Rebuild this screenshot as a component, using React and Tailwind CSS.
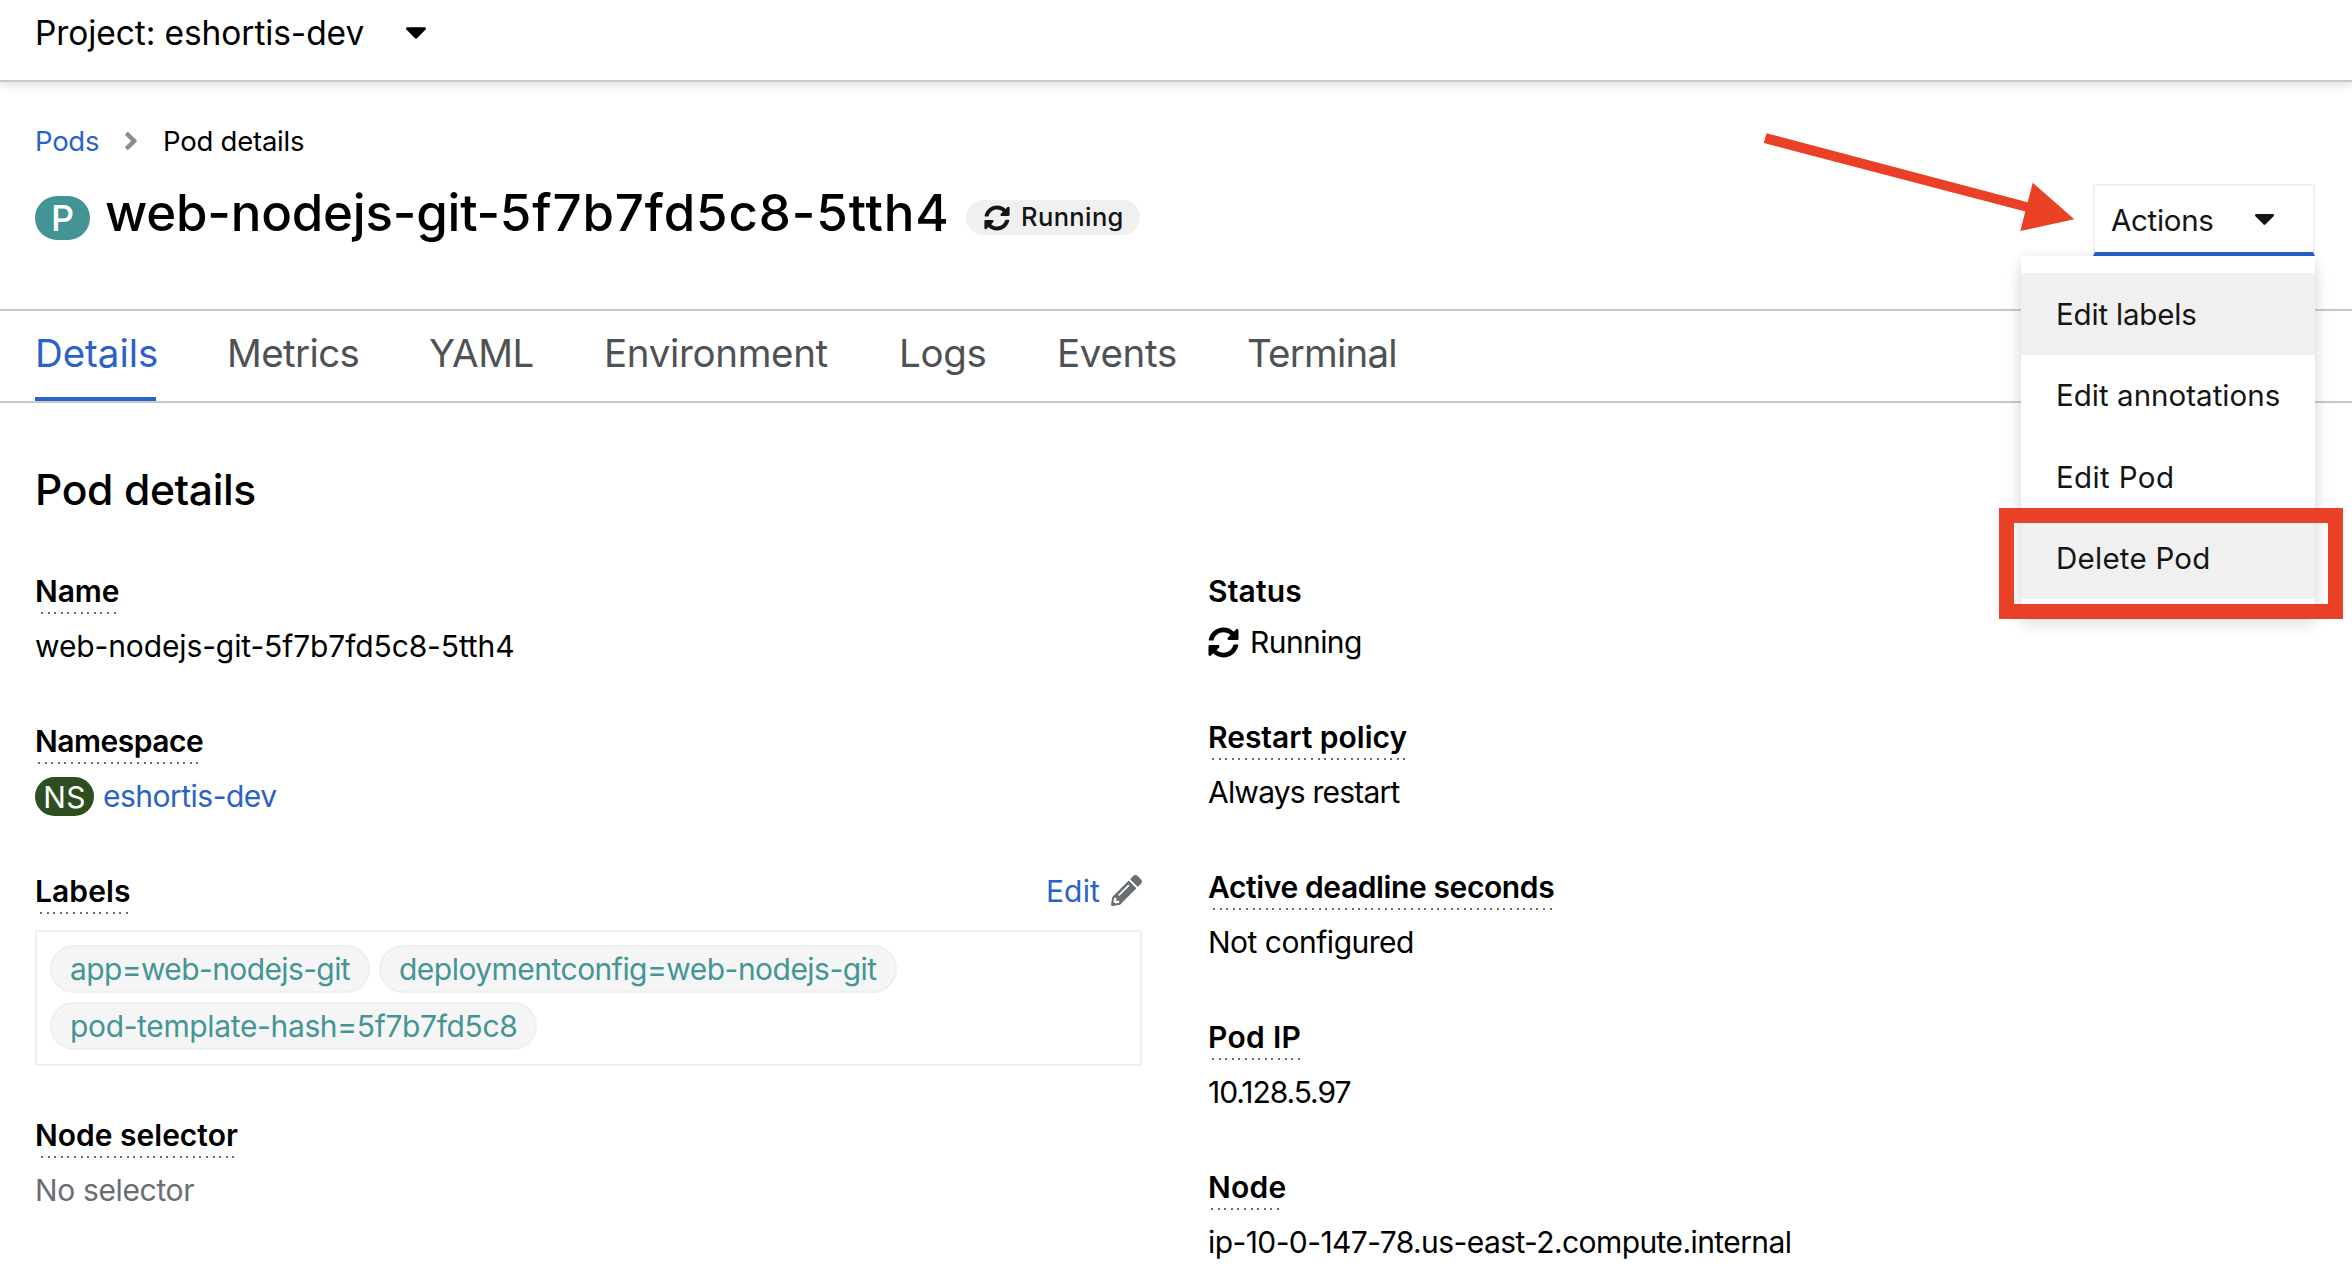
import React from "react";
import { FaPencilAlt, FaSyncAlt } from "react-icons/fa";

const tabs = [
  { label: "Details", cls: "w-[121px] tracking-[-0.0016em]", active: true },
  { label: "Metrics", cls: "w-[131px] tracking-[-0.0157em]" },
  { label: "YAML", cls: "w-[104px] tracking-[-0.0089em]" },
  { label: "Environment", cls: "w-[224px] tracking-[-0.0085em]" },
  { label: "Logs", cls: "w-[87px] tracking-[-0.0084em]" },
  { label: "Events", cls: "w-[119px] tracking-[-0.0075em]" },
  { label: "Terminal", cls: "w-[150px] tracking-[-0.0204em]" },
];

const menuItems = [
  { label: "Edit labels", cls: "bg-[#f0f0f0] tracking-[-0.0061em]" },
  { label: "Edit annotations", cls: "tracking-[0.001em]" },
  { label: "Edit Pod", cls: "tracking-[0.0128em]" },
  { label: "Delete Pod", cls: "bg-[#f0f0f0] tracking-[0.0084em]" },
];

const labels = [
  { text: "app=web-nodejs-git", cls: "w-[320px] tracking-[-0.0205em]" },
  { text: "deploymentconfig=web-nodejs-git", cls: "w-[518px] tracking-[-0.0175em]" },
  { text: "pod-template-hash=5f7b7fd5c8", cls: "w-[487px] tracking-[-0.0118em]" },
];

function Caret({ className }) {
  return (
    <svg viewBox="11 192 298 169" className={className} fill="currentColor" aria-hidden="true">
      <path d="M31.3 192h257.3c17.8 0 26.7 21.5 14.1 34.1L174.1 354.8c-7.8 7.8-20.5 7.8-28.3 0L17.2 226.1C4.6 213.5 13.5 192 31.3 192z" />
    </svg>
  );
}

function AngleRight({ className }) {
  return (
    <svg viewBox="24 96 208 320" className={className} fill="currentColor" aria-hidden="true">
      <path d="M224.3 273l-136 136c-9.4 9.4-24.6 9.4-33.9 0l-22.6-22.6c-9.4-9.4-9.4-24.6 0-33.9l96.4-96.4-96.4-96.4c-9.4-9.4-9.4-24.6 0-33.9L54.3 103c9.4-9.4 24.6-9.4 33.9 0l136 136c9.5 9.4 9.5 24.6.1 34z" />
    </svg>
  );
}

function Term({ children, className = "", dots }) {
  return (
    <dt>
      <div className={`h-10 font-semibold whitespace-nowrap ${className}`}>{children}</div>
      {dots && (
        <div
          className={`mt-px h-0.5 bg-[repeating-linear-gradient(90deg,#6a6e73_0px,#6a6e73_2px,transparent_2px,transparent_6.6px)] ${dots}`}
        />
      )}
    </dt>
  );
}

function Field({ term, termClass, dots, children, className = "" }) {
  return (
    <div>
      <Term className={termClass} dots={dots}>{term}</Term>
      <dd className={`mt-3 flex h-10 items-center whitespace-nowrap ${className}`}>{children}</dd>
    </div>
  );
}

function ActionsMenu() {
  return (
    <div className="relative mt-[2px] h-[72px] w-[222px] text-[29.5px] leading-10 text-[#151515]">
      <button className="flex h-full w-full items-center border-2 border-b-4 border-[#f0f0f0] border-b-[#2a62c8] bg-white pt-px pl-4 text-left">
        <span className="w-[144px] tracking-[-0.0103em]">Actions</span>
        <Caret className="h-[11px] w-[19px]" />
      </button>
      <ul className="absolute top-full right-0 z-10 w-[294px] bg-white py-[17px] shadow-[0_8px_16px_rgba(3,3,3,0.12),0_0_12px_rgba(3,3,3,0.06)]">
        {menuItems.map((item) => (
          <li key={item.label} className={`flex h-[81.5px] items-center pl-[35px] whitespace-nowrap ${item.cls}`}>
            {item.label}
          </li>
        ))}
      </ul>
      <div className="absolute top-[324.4px] -right-7 z-20 h-[110.4px] w-[344.5px] border-[15px] border-[#ea4025]" />
      <svg
        viewBox="0 0 314 104"
        className="absolute top-[-54px] right-[238px] z-20 h-[104px] w-[314px]"
        fill="#ea4025"
        aria-hidden="true"
      >
        <path d="M3.5 3.3 264.7 72.3 269.7 52.7 311.3 89.3 257.3 101 262.3 81.6 .8 13.1z" />
      </svg>
    </div>
  );
}

export default function App() {
  return (
    <div className="h-[1272px] w-[2352px] overflow-hidden bg-white font-['Inter',sans-serif] text-[30px] leading-10 text-black">
      <header className="flex h-[82px] items-start border-b-2 border-[#c9c9c9] pt-[13px] pl-[35px] shadow-[0_2px_10px_rgba(3,3,3,0.16)]">
        <span className="w-[371px] text-[33.5px] tracking-[-0.0026em]">Project: eshortis-dev</span>
        <Caret className="mt-[14px] h-[12px] w-[20px]" />
      </header>

      <nav className="flex items-center pt-[39px] pl-[35px] text-[27.5px]">
        <a className="w-[90px] tracking-[-0.0102em] text-[#2a62c8]">Pods</a>
        <AngleRight className="h-[18px] w-[12px] text-[#8a8d90]" />
        <span className="ml-[26px] tracking-[-0.0082em]">Pod details</span>
      </nav>

      <div className="mt-[21px] flex h-[60px] items-start pr-[37px] pl-[35px]">
        <span className="mt-[14px] flex h-[44px] w-[55px] items-center justify-center rounded-full bg-[#439495] text-[36px] font-medium text-white">
          P
        </span>
        <h1 className="mt-px ml-[15px] w-[861px] text-[51px] leading-[60px] font-medium whitespace-nowrap">
          <span className="tracking-[-0.004em]">web-nodejs-git-</span>
          <span className="tracking-[0.0173em]">5f7b7fd5c8-5tth4</span>
        </h1>
        <span className="mt-[18px] flex h-[35px] w-[174px] items-center rounded-full bg-[#f0f0f0] pl-[18px] text-[25.5px] leading-[34px] font-medium text-[#151515]">
          <FaSyncAlt className="mr-[11px] size-[26px]" />
          <span className="mb-px tracking-[0.015em]">Running</span>
        </span>
        <div className="flex-1" />
        <ActionsMenu />
      </div>

      <div className="mt-[67px] flex h-[94px] gap-[71px] border-y-2 border-[#c9c9c9] pl-[35px] text-[38.5px] leading-[48px]">
        {tabs.map((tab) => (
          <a
            key={tab.label}
            className={`h-[90px] pt-[18px] whitespace-nowrap ${tab.cls} ${
              tab.active ? "border-b-4 border-[#2a62c8] text-[#2a62c8]" : "text-[#4f5255]"
            }`}
          >
            {tab.label}
          </a>
        ))}
      </div>

      <main className="pt-[62px] pl-[35px]">
        <h2 className="h-[50px] text-[42.6px] leading-[50px] font-medium tracking-[-0.009em]">Pod details</h2>

        <div className="mt-[56px] flex items-start gap-[66px]">
          <dl className="flex w-[1107px] flex-col">
            <Field
              term="Name"
              termClass="tracking-[-0.0024em]"
              dots="ml-[6px] w-[76px]"
              className="tracking-[-0.0039em]"
            >
              web-nodejs-git-5f7b7fd5c8-5tth4
            </Field>
            <div className="mt-[55px]">
              <Field term="Namespace" termClass="tracking-[-0.0165em]" dots="ml-[3px] w-[161px]">
                <span className="mt-px flex h-[39px] w-[59px] items-center justify-center rounded-full bg-[#2c4e20] tracking-[0.0132em] text-white">
                  NS
                </span>
                <a className="ml-[9px] tracking-[-0.017em] text-[#2a62c8]">eshortis-dev</a>
              </Field>
            </div>
            <div className="mt-[55px]">
              <div className="flex items-start justify-between">
                <Term className="tracking-[0.0027em]" dots="ml-[5px] w-[88px]">Labels</Term>
                <a className="flex items-center text-[#2a62c8]">
                  <span className="tracking-[0.0048em]">Edit</span>
                  <FaPencilAlt className="mb-px ml-[11px] size-[31px] text-[#6a6e73]" />
                </a>
              </div>
              <dd className="mt-4 flex h-[136px] flex-wrap content-start gap-[9px] border-2 border-[#f0f0f0] pt-[13px] pl-[13px] text-[#449596]">
                {labels.map((l) => (
                  <span
                    key={l.text}
                    className={`flex h-[48px] items-center rounded-full border-2 border-[#efefef] bg-[#f5f5f5] pl-[18px] whitespace-nowrap ${l.cls}`}
                  >
                    {l.text}
                  </span>
                ))}
              </dd>
            </div>
            <div className="mt-[49px]">
              <Field
                term="Node selector"
                termClass=""
                dots="ml-[6px] w-[194px]"
                className="tracking-[-0.0119em] text-[#6a6e73]"
              >
                No selector
              </Field>
            </div>
          </dl>

          <dl className="flex flex-col gap-[55px]">
            <div>
              <Term className="tracking-[0.0058em]">Status</Term>
              <dd className="mt-[11px] flex h-10 items-center">
                <FaSyncAlt className="size-[31px]" />
                <span className="ml-[11px] tracking-[-0.0194em]">Running</span>
              </dd>
            </div>
            <Field
              term="Restart policy"
              termClass="tracking-[-0.0005em]"
              dots="ml-[4px] w-[193px]"
              className="tracking-[-0.0265em]"
            >
              Always restart
            </Field>
            <Field
              term="Active deadline seconds"
              termClass="tracking-[-0.013em]"
              dots="ml-[5px] w-[339px]"
              className="tracking-[-0.0164em]"
            >
              Not configured
            </Field>
            <Field
              term="Pod IP"
              termClass="tracking-[0.0108em]"
              dots="ml-[4px] w-[88px]"
              className="tracking-[-0.0347em]"
            >
              10.128.5.97
            </Field>
            <Field
              term="Node"
              termClass="tracking-[0.0082em]"
              dots="ml-[3px] w-[73px]"
              className="tracking-[-0.0195em]"
            >
              ip-10-0-147-78.us-east-2.compute.internal
            </Field>
          </dl>
        </div>
      </main>
    </div>
  );
}
